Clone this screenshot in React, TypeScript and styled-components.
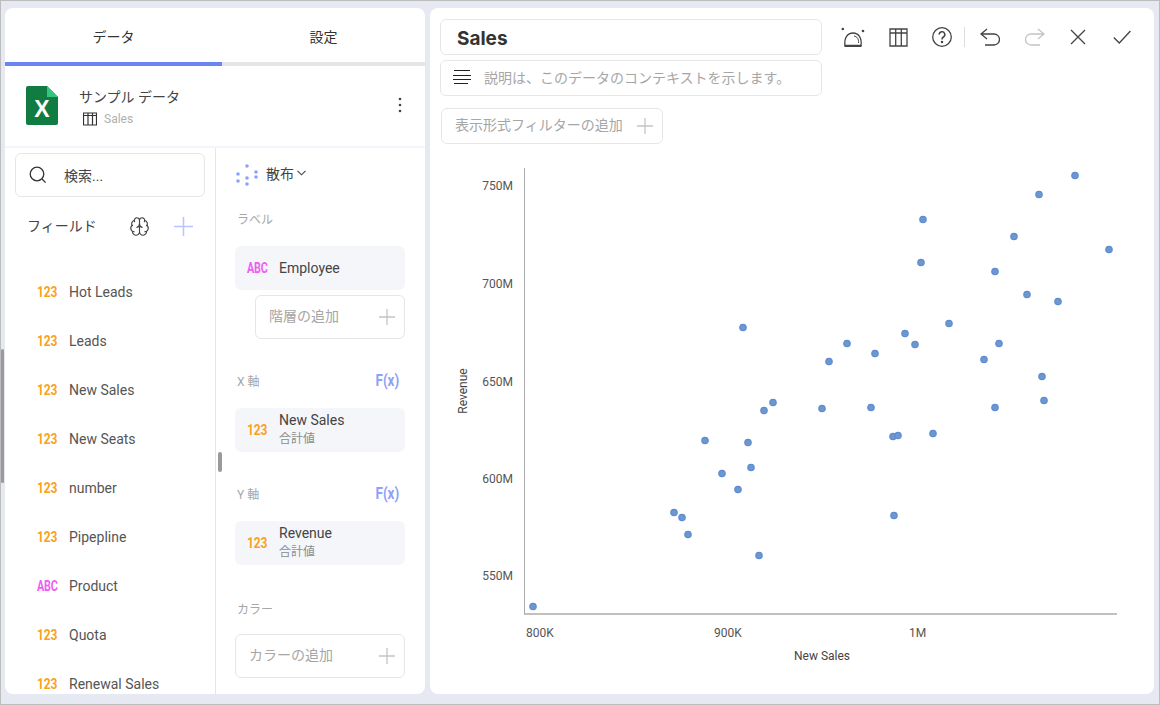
import React from "react";
import styled, { createGlobalStyle } from "styled-components";
import { Brain } from "lucide-react";

const Global = createGlobalStyle`
  html, body { margin: 0; padding: 0; height: 705px; overflow: hidden; }
  body { font-family: Roboto, "Noto Sans CJK JP", sans-serif; color: #444; }
  * { box-sizing: border-box; }
`;

const Page = styled.div`
  position: relative;
  width: 1160px;
  height: 705px;
  background: #e6e9f2;
  border: 1px solid #bdbdbd;
  padding: 7px 5px 10px 4px;
  display: flex;
  gap: 5px;
  overflow: hidden;
`;
const Scroll = styled.div`
  position: absolute;
  left: 0;
  top: 348px;
  width: 3px;
  height: 134px;
  background: #9a9a9a;
  border-radius: 2px;
`;
const LeftPanel = styled.aside`
  width: 420px;
  height: 686px;
  background: #fff;
  border-radius: 8px;
  display: flex;
  flex-direction: column;
  overflow: hidden;
`;
const Tabs = styled.div`
  display: flex;
  height: 58px;
  flex: none;
`;
const Tab = styled.div<{ $active?: boolean }>`
  width: ${p => (p.$active ? 217 : 203)}px;
  display: flex;
  align-items: center;
  justify-content: center;
  padding-top: 1px;
  font-size: 14px;
  color: #333;
  border-bottom: 4px solid ${p => (p.$active ? "#6b84f3" : "#e6e6e6")};
`;
const Source = styled.div`
  height: 82px;
  flex: none;
  display: flex;
  align-items: center;
  padding: 0 23px 2px 21px;
  border-bottom: 2px solid #f4f5fb;
`;
const SourceText = styled.div`
  margin-left: 21px;
  flex: 1;
  display: flex;
  flex-direction: column;
  gap: 6px;
  padding-top: 3px;
`;
const SourceName = styled.div`
  font-size: 14px;
  line-height: 18px;
  color: #444;
`;
const SourceSub = styled.div`
  display: flex;
  align-items: center;
  gap: 7px;
  font-size: 12px;
  line-height: 14px;
  color: #b0b0b0;
  padding-left: 4px;
`;
const Columns = styled.div`
  flex: 1;
  min-height: 0;
  display: flex;
`;
const FieldCol = styled.div`
  width: 211px;
  flex: none;
  border-right: 1px solid #e6e6e6;
  padding: 5px 10px 0;
  display: flex;
  flex-direction: column;
  overflow: hidden;
  position: relative;
`;
const Search = styled.div`
  height: 44px;
  width: 190px;
  flex: none;
  border: 1px solid #e6e6e6;
  border-radius: 6px;
  display: flex;
  align-items: center;
  padding: 0 0 1px 13px;
  gap: 17px;
  font-size: 14px;
  color: #444;
`;
const FieldHead = styled.div`
  height: 58px;
  flex: none;
  display: flex;
  align-items: center;
  padding-left: 12px;
  font-size: 14px;
  color: #444;
`;
const FieldTitle = styled.span`
  width: 102px;
  margin-bottom: 2px;
`;
const BrainWrap = styled.span`
  width: 45px;
  display: flex;
`;
const List = styled.div`
  display: flex;
  flex-direction: column;
  padding-top: 12px;
`;
const Field = styled.div`
  height: 49px;
  flex: none;
  display: flex;
  align-items: center;
  padding-left: 22px;
  font-size: 14px;
  color: #555;
`;
const TypeTag = styled.span<{ $abc?: boolean }>`
  width: 32px;
  flex: none;
  display: inline-block;
  font-family: "Roboto", sans-serif;
  font-weight: 700;
  font-size: 15px;
  letter-spacing: -0.2px;
  transform: scaleX(${p => (p.$abc ? 0.72 : 0.8)});
  transform-origin: left center;
  margin-top: 1px;
  color: ${p => (p.$abc ? "#f25cf2" : "#f9a11b")};
`;
const ConfigCol = styled.div`
  flex: 1;
  padding: 0 20px 0 19px;
  position: relative;
  overflow: hidden;
`;
const Handle = styled.div`
  position: absolute;
  left: 217px;
  top: 451px;
  width: 4px;
  height: 20px;
  background: #9a9a9a;
  border-radius: 2px;
`;
const ChartPick = styled.div`
  height: 47px;
  display: flex;
  align-items: center;
  font-size: 14px;
  color: #444;
  padding: 3px 0 0 1px;
`;
const ChartPickIcon = styled.svg`
  margin-top: 4px;
  fill: #8ea1fa;
`;
const ChartPickLabel = styled.span`
  margin-left: 8px;
  margin-right: 3px;
`;
const SectionLabel = styled.div<{ $top: number; $bottom: number }>`
  height: 20px;
  margin-top: ${p => p.$top}px;
  margin-bottom: ${p => p.$bottom}px;
  display: flex;
  align-items: center;
  justify-content: space-between;
  font-size: 12px;
  color: #a6a6a6;
  padding: 0 6px 0 2px;
`;
const Fx = styled.span`
  font-weight: 700;
  font-size: 16px;
  color: #8ea1fa;
  display: inline-block;
  transform: scaleX(0.84);
  transform-origin: right center;
`;
const Chip = styled.div`
  height: 44px;
  background: #f5f6fa;
  border-radius: 6px;
  display: flex;
  align-items: center;
  padding-left: 12px;
  ${TypeTag} {
    margin-top: -1px;
  }
`;
const ChipText = styled.div<{ $double?: boolean }>`
  display: flex;
  flex-direction: column;
  font-size: 14px;
  line-height: 17px;
  color: #444;
  padding-bottom: ${p => (p.$double ? 5 : 0)}px;
`;
const ChipSub = styled.div`
  font-size: 12px;
  line-height: 14px;
  color: #8c8c8c;
  margin-top: 3px;
  margin-bottom: -3px;
`;
const AddLabel = styled.span`
  margin-bottom: 4px;
`;
const AddBox = styled.div<{ $indent?: boolean }>`
  height: 44px;
  margin-top: ${p => (p.$indent ? 5 : 0)}px;
  margin-left: ${p => (p.$indent ? 20 : 0)}px;
  border: 1px solid #e6e6e6;
  border-radius: 6px;
  display: flex;
  align-items: center;
  justify-content: space-between;
  padding: 0 9px 0 13px;
  font-size: 14px;
  color: #a6a6a6;
`;
const MainPanel = styled.main`
  flex: 1;
  height: 686px;
  background: #fff;
  border-radius: 8px;
  display: flex;
  flex-direction: column;
  overflow: hidden;
`;
const Top = styled.div`
  display: flex;
  padding: 11px 0 0 10px;
`;
const Inputs = styled.div`
  width: 382px;
  display: flex;
  flex-direction: column;
  gap: 5px;
`;
const TitleBox = styled.div`
  height: 36px;
  border: 1px solid #e6e6e6;
  border-radius: 6px;
  display: flex;
  align-items: center;
  padding: 2px 0 0 16px;
  font-family: Inter, sans-serif;
  font-weight: 700;
  font-size: 19px;
  color: #333;
`;
const DescBox = styled.div`
  height: 36px;
  border: 1px solid #e6e6e6;
  border-radius: 6px;
  display: flex;
  align-items: center;
  padding: 0 0 2px 12px;
  gap: 13px;
  font-size: 14px;
  color: #a6a6a6;
`;
const Toolbar = styled.div`
  height: 36px;
  display: flex;
  align-items: center;
  margin-left: 19px;
`;
const ToolIcon = styled.svg<{ $mr: number; $muted?: boolean }>`
  margin-right: ${p => p.$mr}px;
  flex: none;
  fill: none;
  stroke: ${p => (p.$muted ? "#c4c4c4" : "#444")};
  stroke-width: 1.3;
`;
const Sep = styled.div`
  width: 1px;
  height: 20px;
  background: #ddd;
  margin-right: 15px;
`;
const FilterBtn = styled.div`
  align-self: flex-start;
  margin: 12px 0 0 11px;
  width: 222px;
  height: 36px;
  flex: none;
  border: 1px solid #e6e6e6;
  border-radius: 6px;
  display: flex;
  align-items: center;
  justify-content: space-between;
  padding: 0 9px 0 13px;
  font-size: 14px;
  color: #a6a6a6;
`;
const ChartSvg = styled.svg`
  display: block;
  flex: none;
  margin-top: 6px;
`;
const Tick = styled.text`
  font-family: Roboto, sans-serif;
  font-size: 12px;
  fill: #555;
`;
const AxisTitle = styled.text`
  font-family: Roboto, sans-serif;
  font-size: 12px;
  fill: #444;
`;

const Plus = ({ size = 16, color = "#c4c4c4" }: { size?: number; color?: string }) => (
  <svg width={size} height={size} viewBox="0 0 16 16" fill="none" stroke={color} strokeWidth="1.3">
    <path d="M8 0v16M0 8h16" />
  </svg>
);

const ExcelIcon = () => (
  <svg width="32" height="39" viewBox="0 0 32 39">
    <path d="M2 0h19l11 11v26a2 2 0 0 1-2 2H2a2 2 0 0 1-2-2V2a2 2 0 0 1 2-2z" fill="#107c41" />
    <path d="M21 0l11 11H21z" fill="#33c481" />
    <text x="16" y="31" textAnchor="middle" fontFamily="Liberation Sans" fontWeight="700" fontSize="23" fill="#fff">X</text>
  </svg>
);

const GridIcon = ({ size = 14 }: { size?: number }) => (
  <svg width={size} height={size} viewBox="0 0 14 14" fill="none" stroke="#333" strokeWidth="1.2">
    <path d="M.5 1h13v12H.5zM.5 3.5h13M5 1v12M9.5 1v12" />
  </svg>
);

const ScatterIcon = () => (
  <ChartPickIcon width="22" height="22" viewBox="0 0 22 22">
    <circle cx="11" cy="2" r="1.8" /><circle cx="2" cy="10" r="1.8" /><circle cx="20" cy="8" r="1.8" />
    <circle cx="20" cy="13" r="1.8" /><circle cx="11" cy="14" r="1.8" /><circle cx="2" cy="17" r="1.8" />
    <circle cx="11" cy="20" r="1.8" />
  </ChartPickIcon>
);

const fields: [string, boolean][] = [
  ["Hot Leads", false], ["Leads", false], ["New Sales", false], ["New Seats", false], ["number", false],
  ["Pipepline", false], ["Product", true], ["Quota", false], ["Renewal Sales", false],
];

const dots: [number, number][] = [
  [533,606],[674,512],[682,517],[688,534],[759,555],[894,515],[738,489],[722,473],[751,467],[748,442],
  [705,440],[764,410],[773,402],[822,408],[871,407],[893,436],[898,435],[933,433],[743,327],[829,361],
  [847,343],[875,353],[905,333],[915,344],[949,323],[984,359],[999,343],[995,407],[1042,376],[1044,400],
  [921,262],[923,219],[995,271],[1014,236],[1027,294],[1058,301],[1039,194],[1075,175],[1109,249],
];

const yTicks: [string, number][] = [["750M",190],["700M",287.5],["650M",385.5],["600M",482.5],["550M",579.5]];
const xTicks: [string, number][] = [["800K",526],["900K",714],["1M",909]];

export default function App() {
  return (
    <Page>
      <Global />
      <Scroll />
      <LeftPanel>
        <Tabs>
          <Tab $active>データ</Tab>
          <Tab>設定</Tab>
        </Tabs>
        <Source>
          <ExcelIcon />
          <SourceText>
            <SourceName>サンプル データ</SourceName>
            <SourceSub><GridIcon />Sales</SourceSub>
          </SourceText>
          <svg width="4" height="16" viewBox="0 0 4 16" fill="#444">
            <circle cx="2" cy="2" r="1.3" /><circle cx="2" cy="8" r="1.3" /><circle cx="2" cy="14" r="1.3" />
          </svg>
        </Source>
        <Columns>
          <FieldCol>
            <Search>
              <svg width="18" height="18" viewBox="0 0 18 18" fill="none" stroke="#333" strokeWidth="1.3">
                <circle cx="8" cy="8" r="6.8" /><path d="M13 13l3.6 3.6" />
              </svg>
              検索...
            </Search>
            <FieldHead>
              <FieldTitle>フィールド</FieldTitle>
              <BrainWrap><Brain size={21} strokeWidth={1.3} color="#444" /></BrainWrap>
              <Plus size={19} color="#b9c6fb" />
            </FieldHead>
            <List>
              {fields.map(([name, abc]) => (
                <Field key={name}>
                  <TypeTag $abc={abc}>{abc ? "ABC" : "123"}</TypeTag>
                  {name}
                </Field>
              ))}
            </List>
          </FieldCol>
          <ConfigCol>
            <ChartPick>
              <ScatterIcon />
              <ChartPickLabel>散布</ChartPickLabel>
              <svg width="9" height="6" viewBox="0 0 9 6" fill="none" stroke="#444" strokeWidth="1.1">
                <path d="M.5 .8l4 4 4-4" />
              </svg>
            </ChartPick>
            <SectionLabel $top={13} $bottom={18}>ラベル</SectionLabel>
            <Chip>
              <TypeTag $abc>ABC</TypeTag>
              <ChipText>Employee</ChipText>
            </Chip>
            <AddBox $indent><AddLabel>階層の追加</AddLabel><Plus /></AddBox>
            <SectionLabel $top={31} $bottom={18}>X 軸<Fx>F(x)</Fx></SectionLabel>
            <Chip>
              <TypeTag>123</TypeTag>
              <ChipText $double>New Sales<ChipSub>合計値</ChipSub></ChipText>
            </Chip>
            <SectionLabel $top={31} $bottom={18}>Y 軸<Fx>F(x)</Fx></SectionLabel>
            <Chip>
              <TypeTag>123</TypeTag>
              <ChipText $double>Revenue<ChipSub>合計値</ChipSub></ChipText>
            </Chip>
            <SectionLabel $top={33} $bottom={16}>カラー</SectionLabel>
            <AddBox><AddLabel>カラーの追加</AddLabel><Plus /></AddBox>
          </ConfigCol>
        </Columns>
      </LeftPanel>
      <Handle />
      <MainPanel>
        <Top>
          <Inputs>
            <TitleBox>Sales</TitleBox>
            <DescBox>
              <svg width="18" height="16" viewBox="0 0 18 16" fill="none" stroke="#222" strokeWidth="1" shapeRendering="crispEdges">
                <path d="M1 1.5h16M0 6.5h18M0 10.5h18M1 14.5h14" />
              </svg>
              説明は、このデータのコンテキストを示します。
            </DescBox>
          </Inputs>
          <Toolbar>
            <ToolIcon $mr={23} width="25" height="22" viewBox="0 0 25 22">
              <path d="M4 19.5C3 12 6.5 7 12 7s9 5 8 12.5z" />
              <path d="M3.5 20h17" strokeWidth="1.8" />
              <path d="M13 10c3 .5 5 3 4.5 7" strokeWidth="1" />
              <circle cx="1.8" cy="3" r="1.3" fill="#444" stroke="none" />
              <circle cx="22" cy="5" r="1.3" fill="#444" stroke="none" />
            </ToolIcon>
            <ToolIcon $mr={24} width="19" height="19" viewBox="0 0 19 19">
              <path d="M1 1h17v17H1zM1 5h17M6.7 1v17M12.3 1v17" />
            </ToolIcon>
            <ToolIcon $mr={12} width="20" height="20" viewBox="0 0 20 20">
              <circle cx="10" cy="10" r="9.3" />
              <path d="M7.2 7.6a2.8 2.8 0 1 1 4.2 2.4c-1 .6-1.4 1.1-1.4 2.4" strokeWidth="1.5" />
              <circle cx="10" cy="15" r=".6" fill="#444" />
            </ToolIcon>
            <Sep />
            <ToolIcon $mr={25} width="20" height="18" viewBox="0 0 20 18">
              <path d="M7 1L1 6l6 5M1 6h13a5 5 0 0 1 0 11H5" />
            </ToolIcon>
            <ToolIcon $mr={25} $muted width="20" height="18" viewBox="0 0 20 18">
              <path d="M13 1l6 5-6 5M19 6H6a5 5 0 0 0 0 11h9" />
            </ToolIcon>
            <ToolIcon $mr={27} width="16" height="16" viewBox="0 0 16 16">
              <path d="M1 1l14 14M15 1L1 15" />
            </ToolIcon>
            <ToolIcon $mr={0} width="18" height="14" viewBox="0 0 18 14">
              <path d="M.8 7.5l5.5 5.5L17.4 1" />
            </ToolIcon>
          </Toolbar>
        </Top>
        <FilterBtn><AddLabel>表示形式フィルターの追加</AddLabel><Plus /></FilterBtn>
        <ChartSvg width="724" height="544" viewBox="430 150 724 544">
          <path d="M524.5 168V614" stroke="#ababab" fill="none" />
          <path d="M524 614H1117" stroke="#ababab" strokeWidth="1.6" fill="none" />
          {yTicks.map(([t, y]) => <Tick key={t} x="513" y={y} textAnchor="end">{t}</Tick>)}
          {xTicks.map(([t, x]) => <Tick key={t} x={x} y="636.5">{t}</Tick>)}
          <AxisTitle x="822" y="660" textAnchor="middle">New Sales</AxisTitle>
          <AxisTitle transform="translate(467 391) rotate(-90)" textAnchor="middle">Revenue</AxisTitle>
          {dots.map(([x, y]) => (
            <circle key={`${x}-${y}`} cx={x} cy={y + 0.5} r="3.2" fill="#7097cb" stroke="#5a8dd6" strokeWidth="1.2" />
          ))}
        </ChartSvg>
      </MainPanel>
    </Page>
  );
}
